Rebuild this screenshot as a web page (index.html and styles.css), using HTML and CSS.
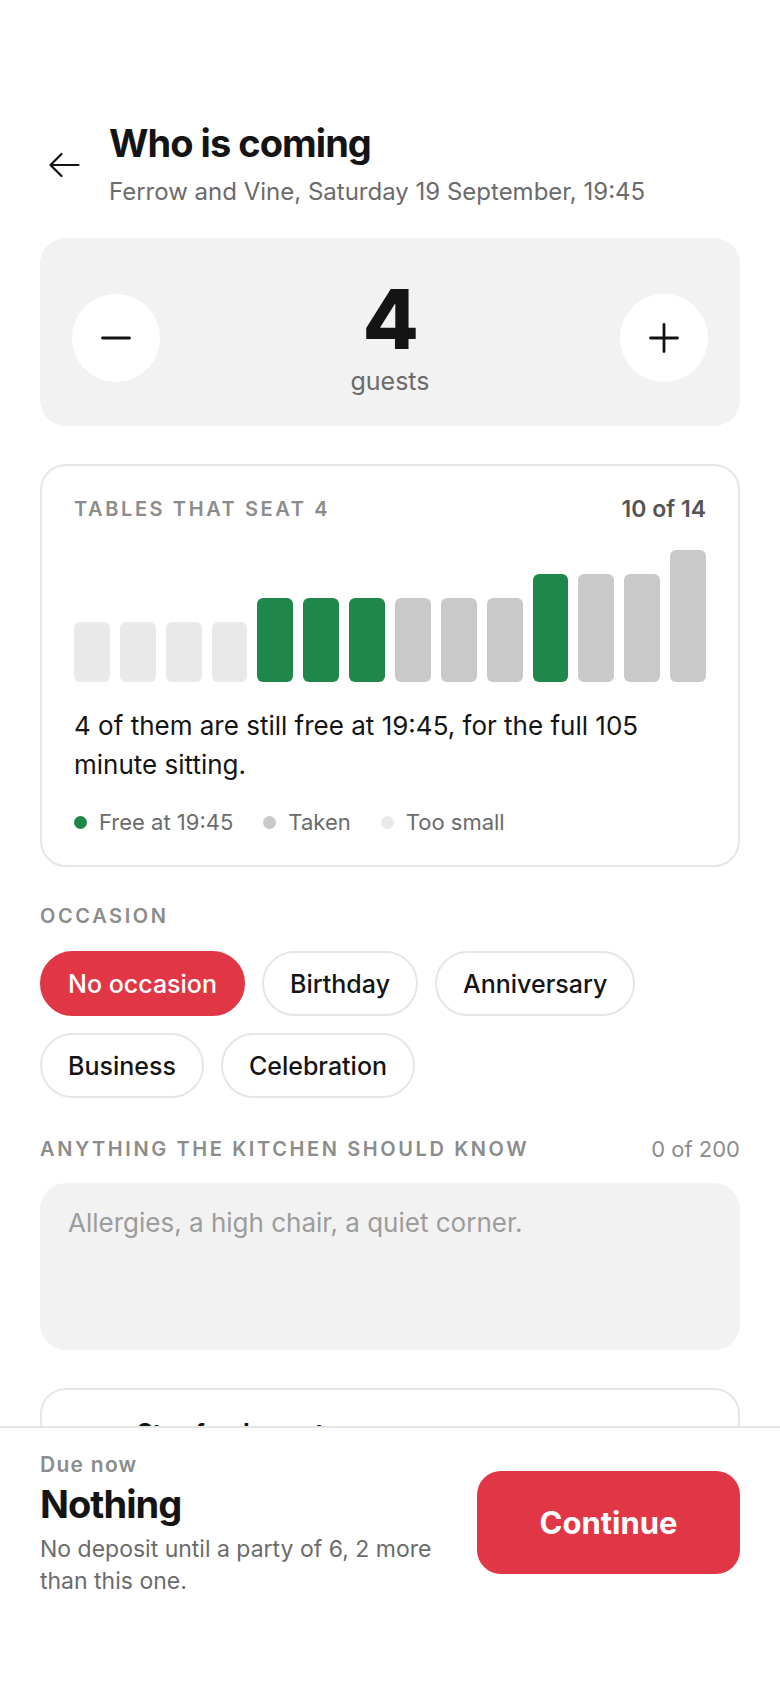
FILE: index.html
```html
<!DOCTYPE html>
<html lang="en">
<head>
  <meta charset="UTF-8" />
  <meta name="viewport" content="width=device-width, initial-scale=1.0" />
  <title>Who is coming</title>

<link rel="stylesheet" href="styles.css">

</head>
<body>

<main class="page">
  <header class="top">
    <button class="back" aria-label="Back">
      <svg width="32" height="26" viewBox="0 0 32 26"><path d="M30.5 13H2.5M13.5 2L2.5 13l11 11" fill="none" stroke="#141414" stroke-width="2.2" stroke-linecap="round" stroke-linejoin="round"/></svg>
    </button>
    <div>
      <h1>Who is coming</h1>
      <p class="sub">Ferrow and Vine, Saturday 19 September, 19:45</p>
    </div>
  </header>

  <section class="stepper">
    <button class="round" aria-label="Fewer guests">
      <svg width="30" height="30" viewBox="0 0 30 30"><path d="M1.5 15h27" stroke="#141414" stroke-width="2.8" stroke-linecap="round"/></svg>
    </button>
    <div class="count">
      <div class="num">4</div>
      <div class="unit">guests</div>
    </div>
    <button class="round" aria-label="More guests">
      <svg width="30" height="30" viewBox="0 0 30 30"><path d="M1.5 15h27M15 1.5v27" stroke="#141414" stroke-width="2.8" stroke-linecap="round"/></svg>
    </button>
  </section>

  <section class="card tables">
    <div class="card-head">
      <span class="label">Tables that seat 4</span>
      <span class="ratio">10 of 14</span>
    </div>
    <div class="bars">
      <span class="bar small" style="height:60px"></span>
      <span class="bar small" style="height:60px"></span>
      <span class="bar small" style="height:60px"></span>
      <span class="bar small" style="height:60px"></span>
      <span class="bar free" style="height:84px"></span>
      <span class="bar free" style="height:84px"></span>
      <span class="bar free" style="height:84px"></span>
      <span class="bar taken" style="height:84px"></span>
      <span class="bar taken" style="height:84px"></span>
      <span class="bar taken" style="height:84px"></span>
      <span class="bar free" style="height:108px"></span>
      <span class="bar taken" style="height:108px"></span>
      <span class="bar taken" style="height:108px"></span>
      <span class="bar taken" style="height:132px"></span>
    </div>
    <p class="note">4 of them are still free at 19:45, for the full 105 minute sitting.</p>
    <div class="legend">
      <span><i class="dot free"></i>Free at 19:45</span>
      <span><i class="dot taken"></i>Taken</span>
      <span><i class="dot small"></i>Too small</span>
    </div>
  </section>

  <section class="block">
    <div class="label">Occasion</div>
    <div class="chips">
      <button class="chip active">No occasion</button>
      <button class="chip">Birthday</button>
      <button class="chip">Anniversary</button>
      <button class="chip">Business</button>
      <button class="chip">Celebration</button>
    </div>
  </section>

  <section class="block">
    <div class="field-head">
      <label class="label" for="notes">Anything the kitchen should know</label>
      <span class="counter">0 of 200</span>
    </div>
    <textarea id="notes" placeholder="Allergies, a high chair, a quiet corner."></textarea>
  </section>

  <section class="card extra">
    <div class="extra-row">
      <span class="extra-icon"></span>
      <div>
        <div class="extra-title">Stay for dessert</div>
        <div class="extra-text">Keep the table another 30 minutes.</div>
      </div>
    </div>
  </section>
</main>

<footer class="bottom">
  <div class="due">
    <div class="due-label">Due now</div>
    <div class="due-amount">Nothing</div>
    <p class="due-text">No deposit until a party of 6, 2 more than this one.</p>
  </div>
  <button class="continue">Continue</button>
</footer>

</body>
</html>
```

FILE: styles.css
```css
html, body {
  margin: 0;
  padding: 0;
}

body {
  font-family: Inter, 'Noto Sans', 'Liberation Sans', sans-serif;
  background: #fff;
  color: #141414;
}

button, textarea {
  font-family: inherit;
}

.page {
  padding: 120px 40px 320px;
}

.top {
  display: flex;
  align-items: flex-start;
  gap: 29px;
}

.back {
  border: none;
  background: none;
  padding: 0;
  margin: 32px 0 0 8px;
  width: 32px;
  height: 26px;
  cursor: pointer;
}

h1 {
  margin: 0;
  font-size: 38px;
  line-height: 46px;
  font-weight: 700;
  letter-spacing: -0.025em;
}

.sub {
  margin: 10px 0 0;
  font-size: 24px;
  line-height: 32px;
  color: #6b6b6b;
}

.stepper {
  margin-top: 30px;
  background: #f2f2f2;
  border-radius: 26px;
  padding: 41px 32px 30px;
  display: flex;
  align-items: center;
  justify-content: space-between;
}

.round {
  width: 88px;
  height: 88px;
  border-radius: 50%;
  border: none;
  background: #fff;
  display: flex;
  align-items: center;
  justify-content: center;
  cursor: pointer;
  padding: 0;
}

.count {
  text-align: center;
}

.num {
  font-size: 82px;
  line-height: 82px;
  font-weight: 800;
  letter-spacing: -0.02em;
}

.unit {
  margin-top: 5px;
  font-size: 25px;
  line-height: 30px;
  color: #6b6b6b;
}

.card {
  border: 2px solid #e6e6e6;
  border-radius: 26px;
  padding: 31px 32px 30px;
}

.tables {
  margin-top: 38px;
}

.card-head, .field-head {
  display: flex;
  justify-content: space-between;
  align-items: center;
  line-height: 24px;
}

.label {
  font-size: 20px;
  line-height: 24px;
  font-weight: 600;
  letter-spacing: 0.13em;
  text-transform: uppercase;
  color: #8c8c8c;
}

.ratio {
  font-size: 23px;
  font-weight: 600;
  color: #555;
}

.bars {
  margin-top: 29px;
  height: 132px;
  display: flex;
  align-items: flex-end;
  gap: 10px;
}

.bar {
  flex: 1;
  border-radius: 6px;
}

.bar.small, .dot.small { background: #e9e9e9; }
.bar.taken, .dot.taken { background: #c9c9c9; }
.bar.free, .dot.free { background: #1f874a; }

.note {
  margin: 24px 0 0;
  font-size: 26px;
  line-height: 39px;
  color: #141414;
}

.legend {
  margin-top: 25px;
  display: flex;
  gap: 30px;
  font-size: 22px;
  line-height: 26px;
  color: #6b6b6b;
}

.legend span {
  display: flex;
  align-items: center;
  gap: 12px;
}

.dot {
  width: 13px;
  height: 13px;
  border-radius: 50%;
}

.block {
  margin-top: 37px;
}

.chips {
  margin-top: 23px;
  display: flex;
  flex-wrap: wrap;
  gap: 17px;
}

.chip {
  height: 65px;
  padding: 0 26px;
  border: 2px solid #e6e6e6;
  border-radius: 33px;
  background: #fff;
  font-size: 25px;
  font-weight: 500;
  color: #141414;
  cursor: pointer;
}

.chip.active {
  background: #e03645;
  border-color: #e03645;
  color: #fff;
}

.block + .block {
  margin-top: 39px;
}

.counter {
  font-size: 22px;
  color: #8c8c8c;
}

textarea {
  display: block;
  width: 100%;
  box-sizing: border-box;
  margin-top: 22px;
  height: 167px;
  border: none;
  border-radius: 26px;
  background: #f2f2f2;
  padding: 24px 28px;
  font-size: 26px;
  line-height: 32px;
  color: #141414;
  resize: none;
}

textarea::placeholder {
  color: #9c9c9c;
}

.extra {
  margin-top: 38px;
  padding-top: 28px;
}

.extra-row {
  display: flex;
  gap: 23px;
}

.extra-icon {
  width: 40px;
  height: 40px;
  flex: none;
}

.extra-title {
  font-size: 24px;
  line-height: 30px;
  font-weight: 700;
}

.extra-text {
  font-size: 22px;
  color: #6b6b6b;
}

.bottom {
  position: fixed;
  left: 0;
  right: 0;
  bottom: 0;
  height: 262px;
  box-sizing: border-box;
  background: #fff;
  border-top: 2px solid #e6e6e6;
  padding: 24px 40px 0;
  display: flex;
  align-items: flex-start;
  gap: 36px;
}

.due {
  flex: 1;
}

.due-label {
  font-size: 21px;
  line-height: 26px;
  font-weight: 600;
  letter-spacing: 0.06em;
  color: #8c8c8c;
}

.due-amount {
  margin-top: 3px;
  font-size: 38px;
  line-height: 46px;
  font-weight: 700;
  letter-spacing: -0.025em;
}

.due-text {
  margin: 6px 0 0;
  font-size: 23px;
  line-height: 32px;
  color: #6b6b6b;
}

.continue {
  flex: none;
  margin-top: 19px;
  width: 263px;
  height: 103px;
  border: none;
  border-radius: 24px;
  background: #e03645;
  color: #fff;
  font-size: 31px;
  font-weight: 700;
  cursor: pointer;
}
```
